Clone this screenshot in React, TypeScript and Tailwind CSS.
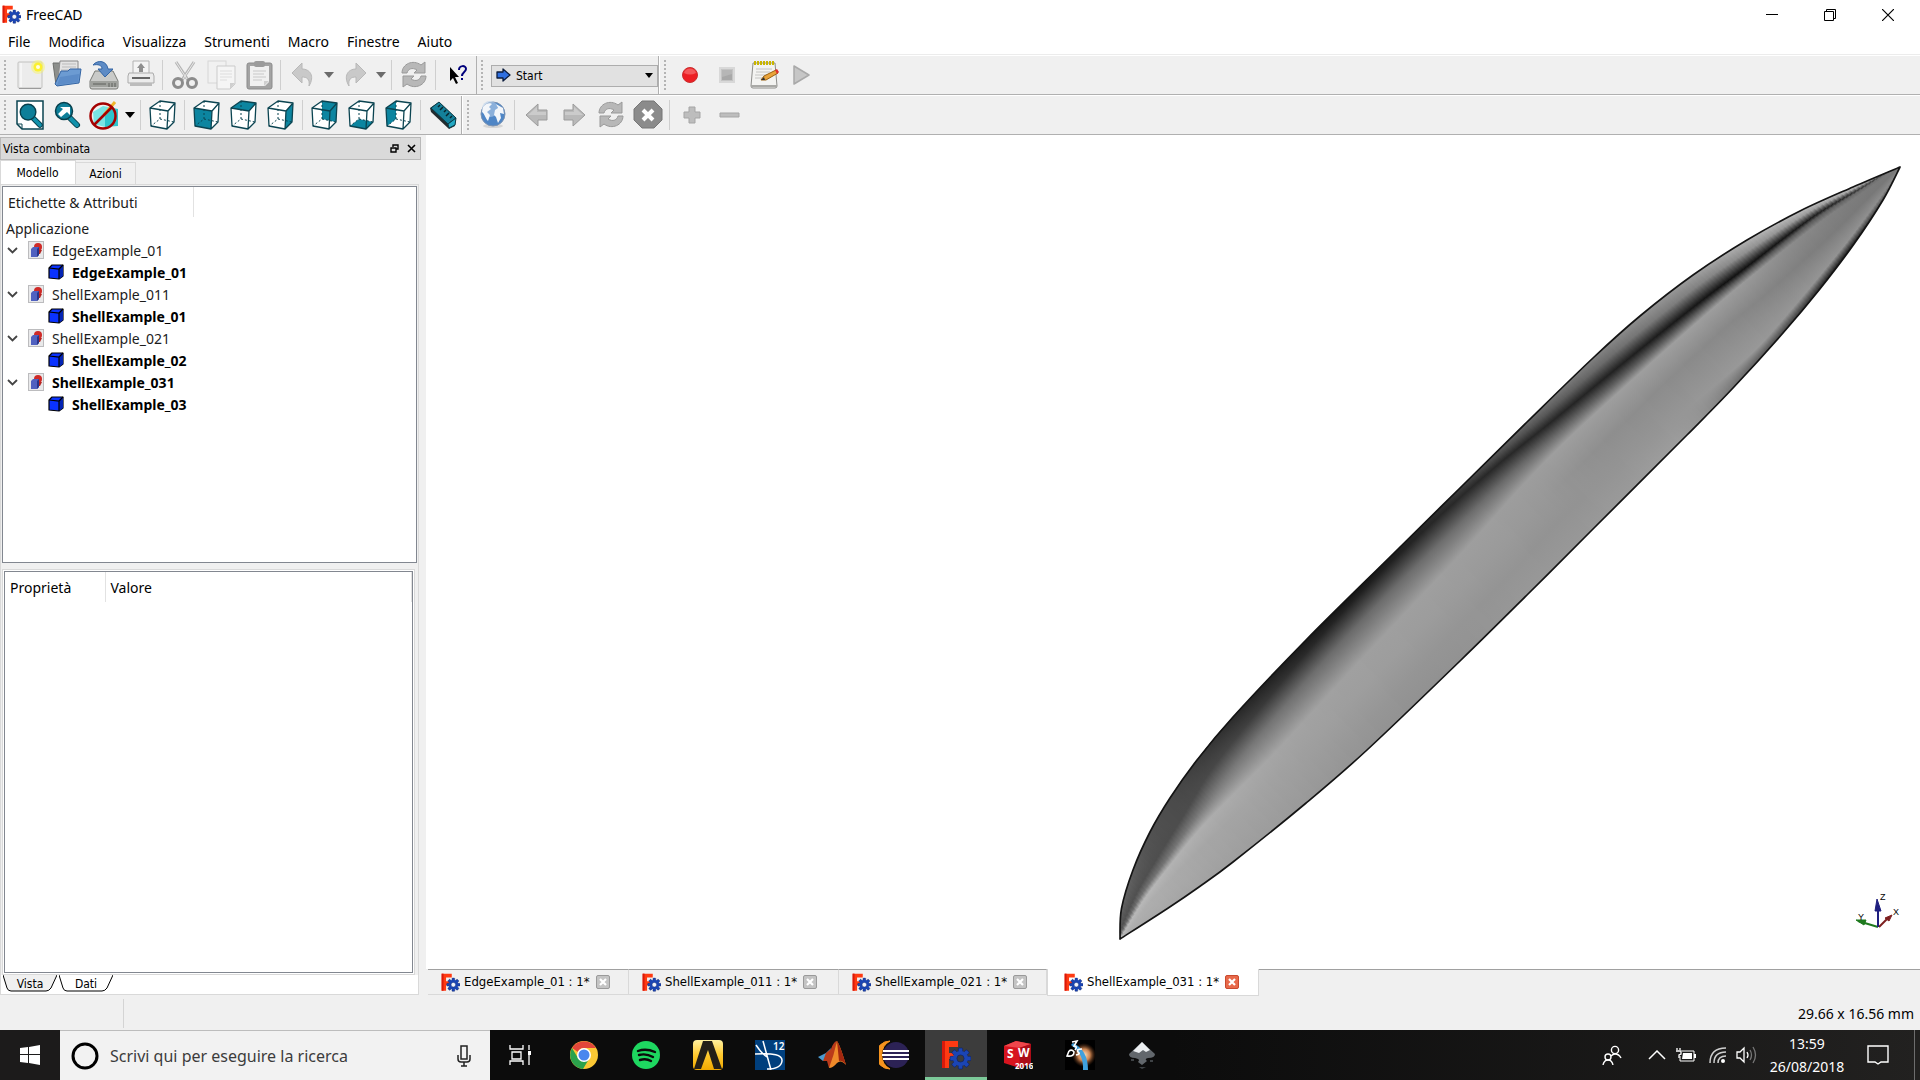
import React from "react";

type Kids = { children?: React.ReactNode };

/* ---------- shared icon helpers ---------- */

function Svg({ children, w = 30, h = 30, box = "0 0 30 30" }: Kids & { w?: number; h?: number; box?: string }) {
  return (
    <svg width={w} height={h} viewBox={box} fill="none" aria-hidden="true" className="shrink-0">
      {children}
    </svg>
  );
}

const GEAR_TEETH = [0, 45, 90, 135, 180, 225, 270, 315];

function FreeCadIcon({ size = 18, hole = "#f2f4fb" }: { size?: number; hole?: string }) {
  return (
    <Svg w={size} h={size}>
      <path d="M1 1h16v6H8v6h6v6H8v9H1z" fill="#ff3a12" />
      <path d="M1 1h3v27H1z" fill="#d9190b" />
      <g transform="translate(19.500 18.500)" fill="#1b45b4" stroke="#0c1f63" strokeWidth=".6">
        {GEAR_TEETH.map((a) => (
          <rect key={a} x="-2.200" y="-10.500" width="4.400" height="6" rx="1" transform={`rotate(${a})`} />
        ))}
        <circle r="7.500" stroke="none" />
        <circle r="3.600" fill={hole} />
      </g>
    </Svg>
  );
}

type Face = "none" | "front" | "top" | "right" | "rear" | "bottom" | "left";

const FACES: Record<Face, string> = {
  none: "",
  front: "M2 8L20 11L19 29L3 26z",
  top: "M2 8L12 1L27 3L20 11z",
  right: "M20 11L27 3L26 22L19 29z",
  rear: "M12 1L27 3L26 22L12 19z",
  bottom: "M3 26L12 19L26 22L19 29z",
  left: "M2 8L12 1L12 19L3 26z",
};

function Cube({ face }: { face: Face }) {
  return (
    <Svg>
      <path d="M2 8L12 1L27 3L26 22L19 29L3 26z" fill="#fff" />
      <path d={FACES[face]} fill="#0c85a0" />
      <path d="M12 1V19L3 26M12 19L26 22" stroke="#0b4451" strokeDasharray="2 2" />
      <path d="M2 8L12 1L27 3L26 22L19 29L3 26zM2 8L20 11L27 3M20 11L19 29" stroke="#0b4451" strokeWidth="1.300" strokeLinejoin="round" />
    </Svg>
  );
}

function Magnifier() {
  return (
    <>
      <path d="M17 17L25 25" stroke="#073f4c" strokeWidth="6" strokeLinecap="round" />
      <path d="M18 18L25 25" stroke="#1191ab" strokeWidth="4" strokeLinecap="round" />
      <circle cx="12" cy="11" r="8.500" fill="#0e7f99" stroke="#073f4c" strokeWidth="1.500" />
    </>
  );
}

const icons = {
  fresh: (
    <Svg>
      <rect x="3" y="2" width="24" height="26" rx="1" fill="#ececec" stroke="#c2c2c0" />
      <path d="M6 3V27" stroke="#fff" />
      <path d="M4 28.500H26" stroke="#9b9b9b" />
      <circle cx="23" cy="7" r="7" fill="#f8f36a" opacity=".5" />
      <circle cx="23" cy="7" r="4.500" fill="#fbf02f" />
      <circle cx="23" cy="7" r="2" fill="#fffde0" />
    </Svg>
  ),
  open: (
    <Svg>
      <path d="M1 3H11L12 5L8 25H4z" fill="#8d8f8c" stroke="#6d6f6c" />
      <path d="M8 1H26V20H6z" fill="#e4e4e4" stroke="#888" />
      <path d="M10 4H24M10 7H24M9 10H24" stroke="#bbb" />
      <path d="M9 11H16L18 9H29L27 23L5 26L3 24z" fill="#6c9bd2" stroke="#3465a4" />
      <path d="M8 17L27 14L26 22L5 25z" fill="#5586c3" opacity=".7" />
    </Svg>
  ),
  save: (
    <Svg>
      <path d="M6 11H24L29 21V27Q29 29 27 29H3Q1 29 1 27V21z" fill="#c9cac8" stroke="#777974" />
      <path d="M2 21H28V27H2z" fill="#9fa19d" />
      <path d="M4 24H17M20 23V27M23 23V27M26 23V27" stroke="#5f615d" />
      <path d="M4 5C9 -1 18 1 19 9H24L16 17L9 9H13C13 5 9 4 4 5z" fill="#5d8bc5" stroke="#3465a4" />
    </Svg>
  ),
  print: (
    <Svg>
      <path d="M7 1H23V14H7z" fill="#f4f4f4" stroke="#b2b2b2" />
      <path d="M15 3L19 8H17V12H13V8H11z" fill="#8f8f8f" />
      <path d="M3 13H27L28 16V23H2V16z" fill="#ececec" stroke="#ababab" />
      <path d="M6 18H24" stroke="#666" strokeWidth="2" />
      <path d="M4 23H26V26H4z" fill="#bcbcbc" />
    </Svg>
  ),
  cut: (
    <Svg>
      <path d="M6 2L18 20M24 2L12 20" stroke="#b5b5b5" strokeWidth="3" />
      <path d="M6 2L17 19M24 2L13 19" stroke="#e8e8e8" />
      <circle cx="8" cy="23" r="4.500" stroke="#8c8c8c" strokeWidth="3" />
      <circle cx="22" cy="23" r="4.500" stroke="#8c8c8c" strokeWidth="3" />
    </Svg>
  ),
  copy: (
    <Svg>
      <rect x="1" y="1" width="18" height="22" fill="#f1f1f1" stroke="#d6d6d6" />
      <path d="M10 6H28V24L23 29H10z" fill="#f5f5f5" stroke="#cbcbcb" />
      <path d="M13 11H25M13 14H25M13 17H25M13 20H20" stroke="#ddd" />
      <path d="M28 23L23 29V23z" fill="#cfcfcf" />
    </Svg>
  ),
  paste: (
    <Svg>
      <rect x="3" y="3" width="25" height="26" rx="2" fill="#a3a3a3" stroke="#8b8b8b" />
      <path d="M6 6H25V22L21 26H6z" fill="#f0f0f0" />
      <rect x="10" y="1" width="11" height="6" rx="2" fill="#9b9b9b" />
      <path d="M9 11H22M9 14H20M9 17H22M9 20H18" stroke="#c8c8c8" />
      <path d="M25 21L20 26V21z" fill="#cfcfcf" />
    </Svg>
  ),
  undo: (
    <Svg>
      <path d="M4 13L14 3V9C22 9 27 16 21 26C22 19 19 17 14 17V23z" fill="#c9c9c9" stroke="#b8b8b8" />
    </Svg>
  ),
  redo: (
    <Svg>
      <path d="M26 13L16 3V9C8 9 3 16 9 26C8 19 11 17 16 17V23z" fill="#c9c9c9" stroke="#b8b8b8" />
    </Svg>
  ),
  refresh: (
    <Svg>
      <g fill="#b8b8b8" stroke="#999" strokeLinejoin="round">
        <path d="M3 13C3 4 14 -1 22 5L26 2V13H15L18 10C13 7 9 9 8 13z" />
        <path d="M27 16C27 25 16 30 8 24L4 27V16H15L12 19C17 22 21 20 22 16z" />
      </g>
    </Svg>
  ),
  help: (
    <Svg>
      <path d="M7 7V21L10 18L13 24L15 23L12 17H16z" fill="#000" />
      <path d="M16 10C16 5 23 5 23 9C23 12 19 12 19 16M19 18V20" stroke="#00007c" strokeWidth="2" />
    </Svg>
  ),
  fitAll: (
    <Svg>
      <path d="M2 1H28V29H7L2 24z" fill="#fff" stroke="#0b4451" strokeWidth="1.500" />
      <path d="M2 24H7V29" stroke="#0b4451" />
      <g transform="translate(2 2) scale(.92)">
        <Magnifier />
      </g>
    </Svg>
  ),
  fitSelection: (
    <Svg>
      <Magnifier />
      <path d="M6 14L11 9L8 7H18V15L15 12L9 17z" fill="#fff" />
    </Svg>
  ),
  drawStyle: (
    <Svg>
      <path d="M4 12L14 6L24 8V22L16 27L5 24z" fill="#79e3e3" />
      <path d="M24 8L29 9V26L16 27V13z" fill="#2fc4cc" />
      <path d="M15 15L26 2" stroke="#efb52c" strokeWidth="3" />
      <circle cx="14" cy="16" r="12.500" stroke="#a40000" strokeWidth="2.500" />
      <path d="M5 25L23 7" stroke="#a40000" strokeWidth="2.500" />
    </Svg>
  ),
  measure: (
    <Svg>
      <path d="M2 8L11 2L28 18L27 26L21 29L3 12z" fill="#222b2e" />
      <path d="M3 8L11 2L28 18L20 24z" fill="#14809a" stroke="#0a3b47" />
      <path d="M12 5L10 7M15 7L12 10M18 10L16 12M21 13L18 16M24 16L22 18" stroke="#08242b" strokeWidth="1.500" />
      <path d="M20 24L28 18L27 25L21 28z" fill="#24a9c4" stroke="#0a3b47" />
    </Svg>
  ),
  record: (
    <Svg>
      <circle cx="15" cy="15" r="7.500" fill="#ed1f24" stroke="#c9302f" />
      <path d="M9 13C10 7 20 7 21 13C17 15 13 15 9 13z" fill="#f4585a" />
    </Svg>
  ),
  stopMacro: (
    <Svg>
      <rect x="8" y="8" width="14" height="14" fill="#c4c4c4" stroke="#d8d8d8" strokeWidth="2" />
      <rect x="10" y="10" width="10" height="10" fill="#a8a8a8" />
      <path d="M10 10H20V14L10 17z" fill="#b6b6b6" />
    </Svg>
  ),
  macros: (
    <Svg>
      <path d="M4 3H26L28 26Q28 28 26 28H4Q2 28 2 26z" fill="#f3f3f1" stroke="#8d8d8a" />
      <path d="M2 26H28" stroke="#a9a9a6" strokeWidth="2" />
      <path d="M5 3H25" stroke="#c9b500" strokeWidth="4" strokeDasharray="2 1" />
      <path d="M7 9H23M7 12H21M6 15H20M6 18H14" stroke="#c4c4c2" />
      <path d="M12 20L15 16L27 10L29 13L17 20z" fill="#e9a33a" stroke="#9a6212" />
      <path d="M26 10L28 9L30 12L28 14z" fill="#e02f2f" />
      <path d="M12 20L15 17L16 20z" fill="#333" />
    </Svg>
  ),
  play: (
    <Svg>
      <path d="M8 6L23 15L8 24z" fill="#c6c6c6" stroke="#a9a9a9" strokeWidth="1.500" strokeLinejoin="round" />
    </Svg>
  ),
  globe: (
    <Svg>
      <ellipse cx="15" cy="26" rx="10" ry="2" fill="#d5d5d5" />
      <circle cx="15" cy="14" r="12" fill="#4f86c6" stroke="#7b93b3" />
      <circle cx="12" cy="9" r="8" fill="#b4cdea" opacity=".6" />
      <path d="M5 7C9 2 13 3 14 4L11 7L13 9L9 12L12 15L10 21C7 18 7 14 4 12zM18 4L25 8L26 14L22 13L23 18L20 23L18 17L16 15L17 10L20 8z" fill="#f3f6fa" />
    </Svg>
  ),
  back: (
    <Svg>
      <path d="M4 15L16 4V10H25V20H16V26z" fill="#b9b9b9" stroke="#9b9b9b" strokeLinejoin="round" />
      <path d="M6 15L15 7V12H24V15z" fill="#cbcbcb" />
    </Svg>
  ),
  forward: (
    <Svg>
      <path d="M26 15L14 4V10H5V20H14V26z" fill="#b9b9b9" stroke="#9b9b9b" strokeLinejoin="round" />
      <path d="M24 15L15 7V12H6V15z" fill="#cbcbcb" />
    </Svg>
  ),
  stop: (
    <Svg>
      <path d="M9 1H21L29 9V20L21 28H9L1 20V9z" fill="#8b8b8b" stroke="#777" />
      <path d="M10 10L20 20M20 10L10 20" stroke="#fff" strokeWidth="4" />
    </Svg>
  ),
  plus: (
    <Svg>
      <path d="M12 7H18V12H23V18H18V23H12V18H7V12H12z" fill="#bdbdbd" stroke="#a5a5a5" />
    </Svg>
  ),
  minus: (
    <Svg>
      <path d="M6 13H25V17H6z" fill="#bdbdbd" stroke="#a5a5a5" />
    </Svg>
  ),
};

/* ---------- toolbar parts ---------- */

function Tool({ label, children }: Kids & { label: string }) {
  return (
    <button type="button" aria-label={label} title={label} className="flex h-9 w-[37px] shrink-0 items-center justify-center">
      {children}
    </button>
  );
}

function Arrow({ label, dim = false }: { label: string; dim?: boolean }) {
  return (
    <button type="button" aria-label={label} className="flex h-9 w-[15px] shrink-0 items-center justify-center">
      <Svg w={10} h={6} box="0 0 10 6">
        <path d="M0 0H10L5 6z" fill={dim ? "#6b6b6b" : "#000"} />
      </Svg>
    </button>
  );
}

const Sep = () => <div className="mx-[3px] h-[30px] w-px shrink-0 bg-[#cfcfcf]" />;

const Grip = () => <div className="mr-[5px] ml-1 h-[30px] w-0 shrink-0 border-l-2 border-dotted border-[#b4b4b4]" />;

function Toolbar({ children, grow = false, label }: Kids & { grow?: boolean; label: string }) {
  return (
    <div
      role="toolbar"
      aria-label={label}
      className={
        grow
          ? "flex h-full flex-1 items-center border-l border-white"
          : "flex h-full shrink-0 items-center border-r border-[#b0b0b0]"
      }
    >
      <Grip />
      {children}
    </div>
  );
}

/* ---------- left dock ---------- */

function GroupIcon() {
  return (
    <Svg w={16} h={18} box="0 0 16 18">
      <rect x="0.500" y="0.500" width="15" height="17" fill="#e9e9ea" stroke="#bcbcbe" />
      <circle cx="10" cy="6" r="4" fill="#cf2a27" />
      <path d="M11 9H14L12 13H11z" fill="#b52522" />
      <path d="M3 8L5 6H11V14L9 16H3z" fill="#5061c0" />
      <path d="M9 8L11 6V14L9 16z" fill="#27348b" />
    </Svg>
  );
}

function PartIcon() {
  return (
    <Svg w={16} h={16} box="0 0 16 16">
      <path d="M1 4L4 1H15V12L11 15L1 14z" fill="#0a32ff" stroke="#000" strokeWidth="1.200" strokeLinejoin="round" />
      <path d="M11 5L15 1V12L11 15z" fill="#0424b4" />
      <path d="M1 4L11 5L15 1M11 5V15" stroke="#000" strokeWidth="1.200" />
    </Svg>
  );
}

const TREE = [
  { name: "EdgeExample_01", child: "EdgeExample_01", active: false },
  { name: "ShellExample_011", child: "ShellExample_01", active: false },
  { name: "ShellExample_021", child: "ShellExample_02", active: false },
  { name: "ShellExample_031", child: "ShellExample_03", active: true },
];

function Dock() {
  return (
    <aside className="flex w-[426px] shrink-0 flex-col bg-[#f0f0f0] pt-[2px] pr-[5px] pb-px">
      <div className="flex h-[23px] shrink-0 items-center border border-[#b9b9b9] bg-[#dadada] pr-1 pl-[2px] font-['DejaVu_Sans_Condensed','DejaVu_Sans',sans-serif] text-[12px]">
        <h2 className="flex-1">Vista combinata</h2>
        <button type="button" aria-label="Stacca" className="mr-2">
          <Svg w={9} h={9} box="0 0 9 9">
            <path d="M3 3V1H8V5H6M1 4H6V8H1z" stroke="#000" strokeWidth="1.400" />
          </Svg>
        </button>
        <button type="button" aria-label="Chiudi pannello">
          <Svg w={9} h={9} box="0 0 9 9">
            <path d="M1 1L8 8M8 1L1 8" stroke="#000" strokeWidth="1.600" />
          </Svg>
        </button>
      </div>
      <div role="tablist" className="flex shrink-0 items-end font-['DejaVu_Sans_Condensed','DejaVu_Sans',sans-serif] text-[12px]">
        <button type="button" role="tab" aria-selected="true" className="h-6 w-[76px] border border-b-0 border-[#d9d9d9] bg-white pr-px">
          Modello
        </button>
        <button type="button" role="tab" aria-selected="false" className="h-[22px] w-[60px] border border-b-0 border-l-0 border-[#d9d9d9]">
          Azioni
        </button>
      </div>
      <div className="mr-[2px] flex flex-1 flex-col border border-b-0 border-[#d9d9d9] bg-[#f0f0f0] pt-px">
        <section className="mx-px h-[377px] shrink-0 border border-[#828790] bg-white text-[14px] text-[#1c1c1c]">
          <div className="flex h-[30px]">
            <div className="flex w-[191px] items-center border-r border-[#e2e2e2] pl-[5px]">Etichette &amp; Attributi</div>
          </div>
          <div className="flex h-[22px] items-center pl-[3px]">Applicazione</div>
          <ul>
            {TREE.map((n) => (
              <li key={n.name}>
                <div className="flex h-[22px] items-center pl-1">
                  <button type="button" aria-label={"Comprimi " + n.name} className="mr-[10px]">
                    <Svg w={11} h={7} box="0 0 11 7">
                      <path d="M1 1L5.500 5.500L10 1" stroke="#444" strokeWidth="1.800" />
                    </Svg>
                  </button>
                  <GroupIcon />
                  <span className={n.active ? "ml-2 font-bold text-black" : "ml-2"}>{n.name}</span>
                </div>
                <ul>
                  <li className="flex h-[22px] items-center pl-[45px] font-bold text-black">
                    <PartIcon />
                    <span className="ml-2">{n.child}</span>
                  </li>
                </ul>
              </li>
            ))}
          </ul>
        </section>
        <section className="mt-[6px] mr-[3px] ml-px flex-1 border border-[#d9d9d9] bg-white p-px">
          <div className="h-full border border-[#828790] text-[14px]">
            <table className="w-full table-fixed text-left">
              <thead>
                <tr className="h-[30px]">
                  <th className="w-[100px] border-r border-[#e2e2e2] pl-[5px] font-normal">Proprietà</th>
                  <th className="border-r border-[#e2e2e2] pl-[5px] font-normal">Valore</th>
                </tr>
              </thead>
            </table>
          </div>
        </section>
      </div>
      <div role="tablist" className="mr-[2px] flex h-5 shrink-0 border border-t-0 border-[#d9d9d9] bg-white font-['DejaVu_Sans_Condensed','DejaVu_Sans',sans-serif] text-[12px] leading-4">
        <DockTab label="Vista" />
        <DockTab label="Dati" selected />
      </div>
    </aside>
  );
}

function DockTab({ label, selected = false }: { label: string; selected?: boolean }) {
  return (
    <button type="button" role="tab" aria-selected={selected} className="relative ml-[2px] flex h-[17px] w-[54px] items-center justify-center">
      <svg viewBox="0 0 54 17" className="absolute inset-0 size-full" fill="none" aria-hidden="true">
        <path d="M0 0L4 13Q5 16 8 16H43Q46 16 48 13L54 0" fill={selected ? "#fff" : "#f0f0f0"} stroke="#000" />
      </svg>
      <span className="relative">{label}</span>
    </button>
  );
}

/* ---------- 3D view ---------- */

// Hull outline in (s, v) coordinates, with s = x - y and v = x + y.
const UPPER: [number, number][] = [
  [181, 2059], [213, 2030], [263, 2003], [318, 1982], [372, 1968], [437, 1957], [516, 1950], [666, 1946],
  [838, 1947], [973, 1948], [1105, 1949], [1235, 1951], [1324, 1956], [1418, 1968], [1507, 1987],
  [1589, 2011], [1666, 2040], [1733, 2067],
];
const LOWER: [number, number][] = [
  [1733, 2067], [1683, 2083], [1610, 2098], [1530, 2109], [1450, 2116], [1345, 2121], [1252, 2122],
  [1065, 2122], [932, 2122], [800, 2121], [617, 2117], [502, 2109], [371, 2095], [312, 2086], [259, 2076], [181, 2059],
];

function curve(p: [number, number][]) {
  let d = "";
  for (let i = 0; i < p.length - 1; i++) {
    const a = p[Math.max(0, i - 1)];
    const b = p[i];
    const c = p[i + 1];
    const e = p[Math.min(p.length - 1, i + 2)];
    d += `C${b[0] + (c[0] - a[0]) / 6} ${b[1] + (c[1] - a[1]) / 6} ${c[0] - (e[0] - b[0]) / 6} ${c[1] - (e[1] - b[1]) / 6} ${c[0]} ${c[1]}`;
  }
  return d;
}

const OUTLINE = "M181 2059" + curve(UPPER) + curve(LOWER) + "Z";

// Each row: station s, then (v, grey) pairs across the hull.
const SHADE: number[][] = [
  [181, 2050, 96, 2054, 80, 2056, 100, 2059, 184, 2062, 176, 2064, 172, 2068, 168],
  [243, 2014, 96, 2030, 80, 2037, 110, 2044, 184, 2052, 174, 2060, 172, 2073, 168],
  [300, 1990, 84, 2015, 78, 2027, 115, 2036, 179, 2050, 170, 2065, 168, 2083, 164],
  [372, 1968, 74, 1998, 76, 2014, 118, 2029, 174, 2050, 165, 2070, 163, 2095, 159],
  [437, 1957, 60, 1982, 72, 2004, 120, 2028, 170, 2050, 164, 2075, 160, 2104, 156],
  [516, 1950, 42, 1972, 64, 1996, 118, 2028, 165, 2055, 160, 2085, 156, 2112, 152],
  [666, 1946, 26, 1958, 40, 1985, 108, 2022, 160, 2050, 158, 2090, 150, 2119, 146],
  [800, 1947, 24, 1953, 32, 1982, 108, 2018, 159, 2050, 156, 2085, 149, 2120, 146],
  [930, 1947, 50, 1956, 40, 1984, 110, 2014, 158, 2050, 154, 2085, 148, 2122, 152],
  [1037, 1948, 90, 1963, 40, 1985, 105, 2008, 157, 2045, 152, 2080, 147, 2121, 152],
  [1127, 1949, 112, 1973, 38, 1990, 100, 2007, 158, 2046, 144, 2085, 148, 2122, 154],
  [1267, 1952, 135, 1987, 32, 2000, 90, 2013, 158, 2048, 140, 2095, 150, 2122, 152],
  [1398, 1965, 155, 2002, 22, 2011, 90, 2021, 157, 2053, 136, 2105, 152, 2119, 90],
  [1468, 1978, 170, 2012, 18, 2019, 90, 2027, 152, 2060, 132, 2102, 150, 2115, 60],
  [1596, 2013, 190, 2030, 30, 2034, 90, 2042, 132, 2066, 124, 2090, 146, 2099, 40],
  [1680, 2044, 195, 2051, 60, 2053, 110, 2057, 122, 2066, 120, 2078, 140, 2085, 60],
  [1733, 2060, 190, 2063, 100, 2064, 115, 2065, 122, 2066, 120, 2068, 130, 2070, 90],
];

function slope(i: number, k: number) {
  const a = SHADE[Math.max(0, i - 1)];
  const b = SHADE[Math.min(SHADE.length - 1, i + 1)];
  return (b[k] - a[k]) / (b[0] - a[0]);
}

function profile(s: number) {
  let i = 0;
  while (i < SHADE.length - 2 && SHADE[i + 1][0] < s) i++;
  const a = SHADE[i];
  const b = SHADE[i + 1];
  const span = b[0] - a[0];
  const t = Math.min(1, Math.max(0, (s - a[0]) / span));
  const t2 = t * t;
  const t3 = t2 * t;
  const row = a.map(
    (n, k) =>
      n * (2 * t3 - 3 * t2 + 1) +
      slope(i, k) * span * (t3 - 2 * t2 + t) +
      b[k] * (3 * t2 - 2 * t3) +
      slope(i + 1, k) * span * (t3 - t2),
  );
  const pts: [number, number][] = [];
  for (let k = 1; k < row.length; k += 2) pts.push([row[k], row[k + 1]]);
  const hold = 0.45 - 0.25 * Math.min(1, Math.max(0, (s - 1000) / 300));
  const [p, q] = pts;
  pts.splice(1, 0, [p[0] + (q[0] - p[0]) * 0.45, p[1] + (q[1] - p[1]) * hold]);
  return pts;
}

const STEP = 6;
const STATIONS = Array.from({ length: Math.ceil(1560 / STEP) }, (_, i) => 178 + i * STEP);

function Viewer() {
  return (
    <svg viewBox="426 135 1494 834" preserveAspectRatio="xMaxYMax meet" className="min-h-0 w-full flex-1 bg-white" role="img" aria-label="Vista 3D">
      <defs>
        <clipPath id="hull">
          <path d={OUTLINE} />
        </clipPath>
        {STATIONS.map((s) => {
          const pts = profile(s + STEP / 2);
          const lo = pts[0][0];
          const hi = pts[pts.length - 1][0];
          return (
            <linearGradient key={s} id={"g" + s} gradientUnits="userSpaceOnUse" x1="0" x2="0" y1={lo} y2={hi}>
              {pts.map(([v, g], k) => (
                <stop key={k} offset={(v - lo) / (hi - lo)} stopColor={`rgb(${Math.round(g)},${Math.round(g)},${Math.round(g)})`} />
              ))}
            </linearGradient>
          );
        })}
      </defs>
      <g transform="matrix(.5 -.5 .5 .5 0 0)">
        <g clipPath="url(#hull)">
          {STATIONS.map((s) => (
            <rect key={s} x={s} y="1930" width={STEP * 2} height="210" fill={`url(#g${s})`} />
          ))}
        </g>
        <path d={OUTLINE} fill="none" stroke="#141414" strokeWidth="2.400" strokeLinejoin="round" />
      </g>
      <g strokeWidth="2">
        <path d="M1878 927L1858 921" stroke="#1f7a1f" />
        <path d="M1856 920L1866 920L1864 925z" fill="#1f7a1f" stroke="#1f7a1f" strokeWidth="1" />
        <path d="M1879 927L1888 918" stroke="#7d1f1f" />
        <path d="M1885 918L1892 915L1889 921z" fill="#7d1f1f" stroke="#7d1f1f" strokeWidth="1" />
        <path d="M1878 927V905" stroke="#1f1f80" />
        <path d="M1877 899L1881 911H1875z" fill="#1f1f80" stroke="#1f1f80" strokeWidth="1" />
      </g>
      <g className="font-['Liberation_Sans',sans-serif] text-[9px]" fill="#000">
        <text x="1880" y="900">Z</text>
        <text x="1893" y="915">X</text>
        <text x="1858" y="920">Y</text>
      </g>
    </svg>
  );
}

const DOCS = [
  { name: "EdgeExample_01 : 1*", width: "w-[201px]" },
  { name: "ShellExample_011 : 1*", width: "w-[210px]" },
  { name: "ShellExample_021 : 1*", width: "w-[208px]" },
];

function CloseBox({ red = false, name }: { red?: boolean; name: string }) {
  return (
    <button type="button" aria-label={"Chiudi " + name} className="ml-[6px]">
      <Svg w={14} h={14} box="0 0 14 14">
        <rect x=".5" y=".5" width="13" height="13" rx="1.500" fill={red ? "#e8694a" : "#c4c4c4"} stroke={red ? "#c94a2e" : "#9a9a9a"} />
        <path d="M4 4L10 10M10 4L4 10" stroke="#fff" strokeWidth="2.200" />
      </Svg>
    </button>
  );
}

function DocTabs() {
  return (
    <div className="flex h-[27px] shrink-0 items-start bg-[#f0f0f0] pl-[2px] font-['DejaVu_Sans_Condensed','DejaVu_Sans',sans-serif] text-[13px]">
      {DOCS.map((d) => (
        <div key={d.name} className={`${d.width} flex h-[26px] shrink-0 items-center border border-l-0 border-t-[#a0a0a0] border-r-[#d9d9d9] border-b-[#d9d9d9] pl-[13px]`}>
          <FreeCadIcon size={19} />
          <button type="button" className="ml-1 whitespace-nowrap">{d.name}</button>
          <CloseBox name={d.name} />
        </div>
      ))}
      <div className="flex h-[27px] w-[212px] shrink-0 items-center border border-t-0 border-[#d9d9d9] bg-white pl-4">
        <FreeCadIcon size={19} />
        <button type="button" className="ml-1 whitespace-nowrap">ShellExample_031 : 1*</button>
        <CloseBox red name="ShellExample_031 : 1*" />
      </div>
      <div className="h-px flex-1 bg-[#a0a0a0]" />
    </div>
  );
}

/* ---------- taskbar ---------- */

const appIcons: { label: string; icon: React.ReactNode; active?: boolean }[] = [
  {
    label: "Chrome",
    icon: (
      <Svg>
        <circle cx="15" cy="15" r="14" fill="#fbc834" />
        <path d="M3 8A14 14 0 0 1 27 8H15A7 7 0 0 0 9 12z" fill="#e2463a" />
        <path d="M3 8A14 14 0 0 0 14 29L20 19A7 7 0 0 1 9 18z" fill="#2ba24c" />
        <circle cx="15" cy="15" r="7" fill="#fff" />
        <circle cx="15" cy="15" r="5.500" fill="#4a86ee" />
      </Svg>
    ),
  },
  {
    label: "Spotify",
    icon: (
      <Svg>
        <circle cx="15" cy="15" r="14" fill="#1ed760" />
        <path d="M7 11Q15 8 24 12M8 15Q15 13 22 17M9 20Q15 18 20 21" stroke="#0b0b0b" strokeWidth="2.400" strokeLinecap="round" />
      </Svg>
    ),
  },
  {
    label: "Ansys",
    icon: (
      <Svg>
        <defs>
          <linearGradient id="amber" x2="0" y2="1">
            <stop stopColor="#fff0a0" />
            <stop offset=".5" stopColor="#ffc92e" />
            <stop offset="1" stopColor="#f0a800" />
          </linearGradient>
        </defs>
        <rect width="30" height="30" rx="4" fill="url(#amber)" />
        <path d="M10 1H19L29 29H21L15 10L8 29H1z" fill="#241f17" />
      </Svg>
    ),
  },
  {
    label: "Delftship",
    icon: (
      <Svg>
        <rect width="30" height="30" fill="#003f7d" />
        <path d="M1 5Q6 13 12 17M8 1L16 30M0 14Q28 12 27 21Q26 29 12 29" stroke="#fff" strokeWidth="1.500" />
        <text x="18" y="10" fill="#fff" className="font-['Noto_Sans',sans-serif] text-[10px] font-semibold">12</text>
      </Svg>
    ),
  },
  {
    label: "Matlab",
    icon: (
      <Svg>
        <path d="M1 17L9 13L14 8L11 20L6 21z" fill="#4b9bd0" />
        <path d="M9 13L14 9Q17 1 20 1L17 22L12 28L10 21L6 21z" fill="#b93a1a" />
        <path d="M20 1Q23 5 29 25Q24 19 20 23Q16 28 12 28Q17 15 20 1z" fill="#ef8a2a" />
        <path d="M20 1Q23 5 29 25Q25 20 22 21z" fill="#a3270f" />
      </Svg>
    ),
  },
  {
    label: "Eclipse",
    icon: (
      <Svg>
        <path d="M11 1A14 14 0 0 0 11 29A16 16 0 0 1 11 1z" fill="#f7941e" stroke="#f7941e" />
        <circle cx="17" cy="15" r="13" fill="#2c2255" />
        <path d="M4 11H30M3 15H30M4 19H30" stroke="#fff" strokeWidth="2" />
      </Svg>
    ),
  },
  { label: "FreeCAD", icon: <FreeCadIcon size={30} hole="#3c3c3c" />, active: true },
  {
    label: "SolidWorks 2016",
    icon: (
      <Svg>
        <path d="M1 6L13 1L28 4V24L17 28L1 23z" fill="#d7141f" />
        <path d="M1 6L13 1L28 4L16 8z" fill="#f0474c" />
        <path d="M16 8L28 4V24L17 28z" fill="#ab0d18" />
        <g fill="#fff" className="font-['Noto_Sans',sans-serif] font-bold">
          <text x="4" y="18" className="text-[12px]">S</text>
          <text x="15" y="17" className="text-[12px]">W</text>
          <text x="12" y="29" className="text-[8px]">2016</text>
        </g>
      </Svg>
    ),
  },
  {
    label: "3D Experience",
    icon: (
      <Svg>
        <defs>
          <radialGradient id="flare">
            <stop stopColor="#ffe2bd" />
            <stop offset=".5" stopColor="#c98350" />
            <stop offset="1" stopColor="#5a2c12" stopOpacity="0" />
          </radialGradient>
        </defs>
        <rect width="30" height="30" fill="#000" />
        <circle cx="19" cy="15" r="12" fill="url(#flare)" />
        <path d="M8 3Q23 10 23 30H18Q19 14 6 5z" fill="#3fa0dd" />
        <path d="M7 2L12 1L9 6Q13 6 10 10M4 11L2 16Q9 17 9 12Q7 9 4 11M17 9Q11 9 13 12Q16 14 11 15" stroke="#fff" strokeWidth="1.600" />
      </Svg>
    ),
  },
  {
    label: "Inkscape",
    icon: (
      <Svg>
        <path d="M15 2L28 14Q28 18 21 18Q17 19 20 21L15 25L11 22Q14 19 8 18Q2 18 2 14z" fill="#62676c" />
        <path d="M15 2L23 10L19 12L16 10L12 13L6 11z" fill="#eceff1" />
        <path d="M12 27H19L15 29zM23 20H26V22H23zM4 19H7V21H4z" fill="#3f4346" />
      </Svg>
    ),
  },
];

function Taskbar() {
  return (
    <footer className="flex h-[50px] shrink-0 bg-[#0c0c0c] text-white">
      <button type="button" aria-label="Start" className="flex w-[60px] shrink-0 items-center justify-center bg-[#1c1b1b]">
        <Svg w={20} h={20} box="0 0 20 20">
          <path d="M0 3L8 2V9H0zM9 2L20 0V9H9zM0 10H8V18L0 17zM9 10H20V20L9 18z" fill="#fff" />
        </Svg>
      </button>
      <div className="flex w-[430px] shrink-0 items-center border-t border-[#bdbdbd] bg-[#f2f2f2] pl-[11px]">
        <Svg w={28} h={28} box="0 0 28 28">
          <circle cx="14" cy="14" r="12" stroke="#000" strokeWidth="3" />
        </Svg>
        <input
          type="text"
          aria-label="Cerca"
          placeholder="Scrivi qui per eseguire la ricerca"
          className="ml-[11px] min-w-0 flex-1 bg-transparent text-[16px] outline-none placeholder:text-[#3c3c3c] placeholder:opacity-100"
        />
        <button type="button" aria-label="Microfono" className="mr-[18px]">
          <Svg w={16} h={22} box="0 0 16 22">
            <rect x="5" y="1" width="6" height="13" stroke="#222" strokeWidth="1.500" />
            <path d="M2 10V14Q2 17 5 17H11Q14 17 14 14V10M8 17V21M5 21H11" stroke="#222" strokeWidth="1.500" />
          </Svg>
        </button>
      </div>
      <button type="button" aria-label="Visualizzazione attività" className="flex w-[63px] shrink-0 items-center justify-center pr-[3px]">
        <Svg w={22} h={20} box="0 0 22 20">
          <path d="M1 0V4H14V0M3 7H12V14H3zM1 20V16H14V20M20 0V5M20 10V20" stroke="#fff" strokeWidth="1.300" />
          <rect x="19" y="6" width="3" height="4" fill="#fff" />
        </Svg>
      </button>
      {appIcons.map((a) => (
        <button
          key={a.label}
          type="button"
          aria-label={a.label}
          className={
            a.active
              ? "flex w-[62px] shrink-0 items-center justify-center border-t-[3px] border-b-[3px] border-t-[#3c3c3c] border-b-[#7cc999] bg-[#3c3c3c]"
              : "flex w-[62px] shrink-0 items-center justify-center"
          }
        >
          {a.icon}
        </button>
      ))}
      <div className="flex flex-1 items-center justify-end bg-linear-to-r from-[#0c0c0c] to-[#222120]">
        <button type="button" aria-label="Contatti" className="mr-[26px]">
          <Svg w={20} h={20} box="0 0 20 20">
            <g stroke="#fff" strokeWidth="1.400">
              <circle cx="13" cy="5" r="3.600" />
              <circle cx="6" cy="12" r="3" />
              <path d="M1 20Q2 15 6 15Q10 15 11 20M9 11Q11 9 13 9Q17 9 19 13" />
            </g>
          </Svg>
        </button>
        <button type="button" aria-label="Mostra icone nascoste" className="mr-[10px]">
          <Svg w={18} h={10} box="0 0 18 10">
            <path d="M1 9L9 1L17 9" stroke="#fff" strokeWidth="1.500" />
          </Svg>
        </button>
        <button type="button" aria-label="Batteria" className="mr-[13px]">
          <Svg w={20} h={14} box="0 0 20 14">
            <path d="M6 3H18V13H4V8" stroke="#fff" />
            <path d="M7 5H16V11H6z" fill="#fff" />
            <path d="M18 6H20V10H18z" fill="#fff" />
            <path d="M1 0V2M4 0V2M0 3H5V6L3 7V10" stroke="#fff" strokeWidth="1.300" />
          </Svg>
        </button>
        <button type="button" aria-label="Rete" className="mr-[9px]">
          <Svg w={18} h={18} box="0 0 18 18">
            <path d="M1 17Q1 2 17 2M5 17Q5 6 17 6M9 17Q9 10 17 10" stroke="#cfcfcf" strokeWidth="1.500" />
            <circle cx="14" cy="15" r="2" fill="#fff" />
          </Svg>
        </button>
        <button type="button" aria-label="Volume" className="mr-[10px]">
          <Svg w={22} h={18} box="0 0 22 18">
            <path d="M1 6H4L8 2V16L4 12H1z" stroke="#fff" strokeWidth="1.300" />
            <path d="M11 6Q13 9 11 12" stroke="#fff" strokeWidth="1.300" />
            <path d="M14 4Q17 9 14 14M17 1Q22 9 17 17" stroke="#777" strokeWidth="1.300" />
          </Svg>
        </button>
        <time className="flex w-[78px] flex-col items-center text-[14px] leading-[23px] whitespace-nowrap">
          <span>13:59</span>
          <span>26/08/2018</span>
        </time>
        <button type="button" aria-label="Notifiche" className="mr-[25px] ml-[21px]">
          <Svg w={22} h={20} box="0 0 22 20">
            <path d="M1 1H21V17H14L11 19L8 17H1z" stroke="#fff" strokeWidth="1.400" />
          </Svg>
        </button>
        <div className="mr-[5px] h-full w-px bg-[#6d6d6d]" />
      </div>
    </footer>
  );
}

/* ---------- window ---------- */

const MENUS = ["File", "Modifica", "Visualizza", "Strumenti", "Macro", "Finestre", "Aiuto"];

export default function App() {
  return (
    <div className="flex h-screen flex-col overflow-hidden bg-[#f0f0f0] font-['Noto_Sans',sans-serif] text-[14px] text-black">
      <header className="shrink-0 bg-white">
        <div className="flex h-[29px] items-center pl-[2px]">
          <FreeCadIcon size={19} />
          <h1 className="ml-[5px] flex-1 text-[14px]">FreeCAD</h1>
          <button type="button" aria-label="Riduci a icona" className="flex h-full w-[58px] items-center justify-center">
            <Svg w={12} h={12} box="0 0 12 12">
              <path d="M0 5.500H12" stroke="#000" />
            </Svg>
          </button>
          <button type="button" aria-label="Ripristina" className="flex h-full w-[58px] items-center justify-center">
            <Svg w={12} h={12} box="0 0 12 12">
              <path d="M.5 2.500H9.500V11.500H.5zM2.500 2V.5H11.500V9.500H10" stroke="#000" />
            </Svg>
          </button>
          <button type="button" aria-label="Chiudi" className="mr-[3px] flex h-full w-[58px] items-center justify-center">
            <Svg w={12} h={12} box="0 0 12 12">
              <path d="M0 0L12 12M12 0L0 12" stroke="#000" strokeWidth="1.200" />
            </Svg>
          </button>
        </div>
        <nav className="flex h-[26px] items-center gap-[18px] border-b border-[#ececec] pl-2">
          {MENUS.map((m) => (
            <button key={m} type="button">{m}</button>
          ))}
        </nav>
      </header>

      <div className="flex h-10 shrink-0 items-center border-t border-b border-t-white border-b-[#b0b0b0]">
        <Toolbar label="File">
          <Tool label="Nuovo">{icons.fresh}</Tool>
          <Tool label="Apri">{icons.open}</Tool>
          <Tool label="Salva">{icons.save}</Tool>
          <Tool label="Stampa">{icons.print}</Tool>
          <Sep />
          <Tool label="Taglia">{icons.cut}</Tool>
          <Tool label="Copia">{icons.copy}</Tool>
          <Tool label="Incolla">{icons.paste}</Tool>
          <Sep />
          <Tool label="Annulla">{icons.undo}</Tool>
          <Arrow dim label="Elenco annulla" />
          <Tool label="Ripristina modifica">{icons.redo}</Tool>
          <Arrow dim label="Elenco ripristina" />
          <Sep />
          <Tool label="Aggiorna">{icons.refresh}</Tool>
          <Sep />
          <Tool label="Che cos'è?">{icons.help}</Tool>
        </Toolbar>
        <Toolbar label="Ambiente">
          <div className="relative ml-[3px] h-[22px] w-[167px]">
            <select aria-label="Ambiente di lavoro" className="size-full appearance-none border border-[#adadad] bg-[#e1e1e1] pl-6 font-['DejaVu_Sans_Condensed','DejaVu_Sans',sans-serif] text-[12px]">
              <option>Start</option>
            </select>
            <div className="pointer-events-none absolute inset-0 flex items-center justify-between px-[5px]">
              <Svg w={15} h={14} box="0 0 15 14">
                <path d="M1 4H7V1L14 7L7 13V10H1z" fill="#2f6fe0" stroke="#0b1c3d" strokeWidth="1.300" strokeLinejoin="round" />
              </Svg>
              <Svg w={8} h={5} box="0 0 8 5">
                <path d="M0 0H8L4 5z" fill="#000" />
              </Svg>
            </div>
          </div>
        </Toolbar>
        <Toolbar grow label="Macro">
          <Tool label="Registra macro">{icons.record}</Tool>
          <Tool label="Ferma registrazione">{icons.stopMacro}</Tool>
          <Tool label="Macro">{icons.macros}</Tool>
          <Tool label="Esegui macro">{icons.play}</Tool>
        </Toolbar>
      </div>

      <div className="flex h-10 shrink-0 items-center border-t border-b border-t-white border-b-[#b0b0b0]">
        <Toolbar label="Vista">
          <Tool label="Adatta tutto">{icons.fitAll}</Tool>
          <Tool label="Adatta selezione">{icons.fitSelection}</Tool>
          <Tool label="Stile di disegno">{icons.drawStyle}</Tool>
          <Arrow label="Elenco stili" />
          <Sep />
          <Tool label="Assonometria"><Cube face="none" /></Tool>
          <Sep />
          <Tool label="Davanti"><Cube face="front" /></Tool>
          <Tool label="Sopra"><Cube face="top" /></Tool>
          <Tool label="Destra"><Cube face="right" /></Tool>
          <Sep />
          <Tool label="Dietro"><Cube face="rear" /></Tool>
          <Tool label="Sotto"><Cube face="bottom" /></Tool>
          <Tool label="Sinistra"><Cube face="left" /></Tool>
          <Sep />
          <Tool label="Misura distanza">{icons.measure}</Tool>
        </Toolbar>
        <Toolbar grow label="Navigazione">
          <Tool label="Apri sito web">{icons.globe}</Tool>
          <Sep />
          <Tool label="Indietro">{icons.back}</Tool>
          <Tool label="Avanti">{icons.forward}</Tool>
          <Tool label="Ricarica">{icons.refresh}</Tool>
          <Tool label="Interrompi">{icons.stop}</Tool>
          <Sep />
          <Tool label="Ingrandisci">{icons.plus}</Tool>
          <Tool label="Riduci">{icons.minus}</Tool>
        </Toolbar>
      </div>

      <main className="flex min-h-0 flex-1">
        <Dock />
        <div className="flex min-w-0 flex-1 flex-col">
          <Viewer />
          <DocTabs />
        </div>
      </main>

      <div className="flex h-[34px] shrink-0 items-center justify-between pr-[6px]">
        <div className="ml-[123px] h-[29px] w-px bg-[#d4d4d4]" />
        <span>29.66 x 16.56 mm</span>
      </div>

      <Taskbar />
    </div>
  );
}
